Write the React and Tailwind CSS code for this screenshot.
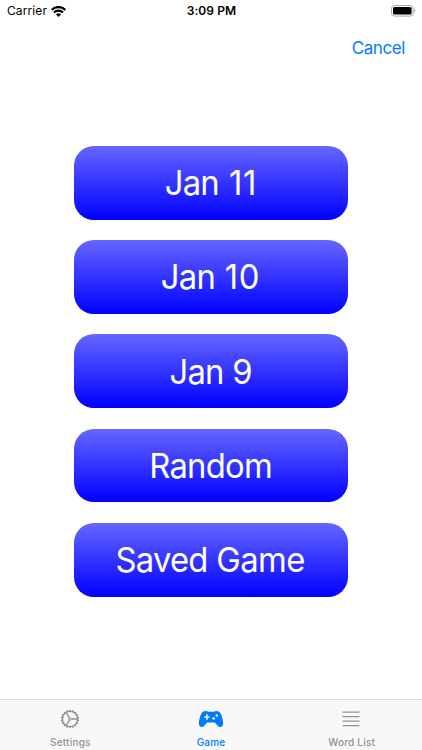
import React from 'react';

const games = [
  { word: "Jan", rest: "11", tracking: "tracking-[0.8px]" },
  { word: "Jan", rest: "10", tracking: "tracking-[0.6px]" },
  { word: "Jan", rest: "9", tracking: "tracking-[-0.7px]" },
  { word: "Random" },
  { word: "Saved", rest: "Game", tracking: "tracking-[-0.6px]" },
];

const teeth = Array.from({ length: 18 }, (_, i) => i * 20);

const WifiIcon = () => (
  <svg className="w-[15px] h-[11px]" viewBox="0 0 15 11" fill="none" stroke="#000">
    <path d="M0.7 3.9 A9.6 9.6 0 0 1 14.3 3.9" strokeWidth="2.3" />
    <path d="M3 6.5 A6.3 6.3 0 0 1 12 6.5" strokeWidth="2.1" />
    <path d="M7.5 10.9 L5 8.5 A3.5 3.5 0 0 1 10 8.5 Z" fill="#000" stroke="none" />
  </svg>
);

const BatteryIcon = () => (
  <svg className="w-[25px] h-[12px]" viewBox="0 0 25 12">
    <rect x="0.5" y="0.5" width="21.6" height="10.6" rx="3" fill="#fff" stroke="#a6a6a6" />
    <rect x="2" y="2" width="18.6" height="7.6" rx="1.6" fill="#000" />
    <path d="M23.3 4 C24.7 4.5 24.7 7.1 23.3 7.6 Z" fill="#999" />
  </svg>
);

const GearIcon = () => (
  <svg className="w-5 h-5" viewBox="0 0 20 20" fill="none" stroke="#8e8e8e">
    {teeth.map((angle) => (
      <path key={angle} d="M10 2.4 V0.7" strokeWidth="1.5" transform={`rotate(${angle} 10 10)`} />
    ))}
    <circle cx="10" cy="10" r="7.6" strokeWidth="1.4" />
    <circle cx="10" cy="10" r="1.2" strokeWidth="1" />
    <path d="M11.4 10 H17.3 M9.3 8.8 L6.3 3.7 M9.3 11.2 L6.3 16.3" strokeWidth="1.3" />
  </svg>
);

const GamepadIcon = () => (
  <svg className="w-[26px] h-[18px]" viewBox="0 0 26 18">
    <path
      d="M8 1 C9.1 1 9.6 1.8 10.6 1.8 H15.4 C16.4 1.8 16.9 1 18 1 C20.6 1 22 2 22.9 4.1 C24.1 6.8 25.1 10.8 25.1 13.6 C25.1 15.8 24 17 22.3 17 C20.9 17 20 16.3 19 15 L17.3 13 C16.9 12.5 16.6 12.4 16 12.4 H10 C9.4 12.4 9.1 12.5 8.7 13 L7 15 C6 16.3 5.1 17 3.7 17 C2 17 0.9 15.8 0.9 13.6 C0.9 10.8 1.9 6.8 3.1 4.1 C4 2 5.4 1 8 1 Z"
      fill="#007aff"
    />
    <path d="M9 4.8 V9.2 M6.8 7 H11.2" stroke="#f8f8f8" strokeWidth="1.4" strokeLinecap="round" />
    <circle cx="18.8" cy="5.5" r="1.25" fill="#f8f8f8" />
    <circle cx="15.6" cy="8.5" r="1.25" fill="#f8f8f8" />
  </svg>
);

const ListIcon = () => (
  <svg className="w-[18px] h-4 mr-px" viewBox="0 0 18 16" stroke="#929292" strokeWidth="1.3">
    <path d="M0.5 1.2 H17.5 M0.5 5.7 H17.5 M0.5 10.2 H17.5 M0.5 14.7 H17.5" />
  </svg>
);

const tabs = [
  { label: "Settings", icon: GearIcon, color: "text-[#929292]" },
  { label: "Game", icon: GamepadIcon, color: "text-[#007aff]" },
  { label: "Word List", icon: ListIcon, color: "text-[#929292]" },
];

const App = () => {
  return (
    <div className="flex flex-col w-[422px] h-[750px] bg-white overflow-hidden font-['Inter',sans-serif]">
      {/* Status bar */}
      <header className="grid grid-cols-3 items-center h-[22px] pl-[7px] pr-[6px] text-black">
        <div className="flex items-center gap-1">
          <span className="text-[12px] tracking-[0.1px]">Carrier</span>
          <WifiIcon />
        </div>
        <span className="text-center text-[12px] font-semibold tracking-[0.1px]">3:09 PM</span>
        <div className="flex justify-end">
          <BatteryIcon />
        </div>
      </header>

      {/* Navigation */}
      <div className="flex justify-end items-center h-[50px] pt-[3px] pr-[17px]">
        <button className="text-[17px] tracking-[-0.4px] text-[#007aff]">Cancel</button>
      </div>

      {/* Game choices */}
      <main className="flex-1 flex flex-col items-center gap-[20.4px] pt-[73.7px]">
        {games.map(({ word, rest, tracking }) => (
          <button
            key={`${word} ${rest}`}
            className="w-[274px] h-[73.9px] shrink-0 rounded-[20px] bg-linear-to-b/srgb from-[#6666ff] to-[#0000ff] text-white text-[34px] leading-none pt-px pr-px"
          >
            <span className="inline-block scale-x-[0.965] tracking-[-0.8px]">
              {word}
              {rest && <span className={tracking}> {rest}</span>}
            </span>
          </button>
        ))}
      </main>

      {/* Tab bar */}
      <nav className="grid grid-cols-3 h-[51px] border-t border-[#d8d8d8] bg-[#f8f8f8]">
        {tabs.map(({ label, icon: Icon, color }) => (
          <div key={label} className={`flex flex-col items-center ${color}`}>
            <div className="flex items-center justify-center h-[38px]">
              <Icon />
            </div>
            <span className="-mt-[2px] text-[10px] leading-3 font-medium tracking-[0.2px]">{label}</span>
          </div>
        ))}
      </nav>
    </div>
  );
};

export default App;
